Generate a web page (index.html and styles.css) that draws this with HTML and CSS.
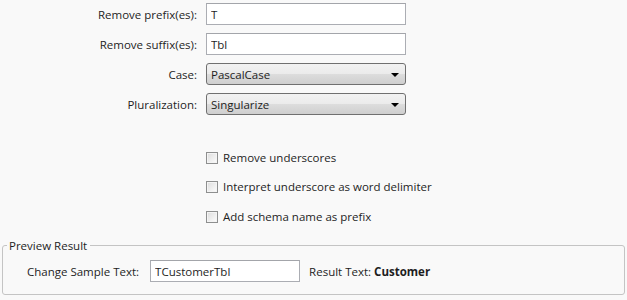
FILE: index.html
```html
<!DOCTYPE html>
<html lang="en">
<head>
    <meta charset="UTF-8">
    <title>Naming Options</title>
    <link rel="stylesheet" href="styles.css">
</head>
<body>

    <div class="form">
        <label for="prefix">Remove prefix(es):</label>
        <input type="text" id="prefix" class="text-box" value="T">

        <label for="suffix">Remove suffix(es):</label>
        <input type="text" id="suffix" class="text-box" value="Tbl">

        <label>Case:</label>
        <div class="combo">
            <span>PascalCase</span>
            <span class="arrow"></span>
        </div>

        <label>Pluralization:</label>
        <div class="combo">
            <span>Singularize</span>
            <span class="arrow"></span>
        </div>
    </div>

    <div class="checks">
        <div class="check first"><span class="box"></span>Remove underscores</div>
        <div class="check"><span class="box"></span>Interpret underscore as word delimiter</div>
        <div class="check last"><span class="box"></span>Add schema name as prefix</div>
    </div>

    <fieldset class="preview">
        <legend>Preview Result</legend>
        <div class="preview-row">
            <label for="sample">Change Sample Text:</label>
            <input type="text" id="sample" class="text-box sample" value="TCustomerTbl">
            <span class="result">Result Text: <b>Customer</b></span>
        </div>
    </fieldset>

</body>
</html>
```

FILE: styles.css
```css
body {
    margin: 0;
    background: #f9f9f9;
    font-family: "Open Sans", "Noto Sans", sans-serif;
    font-size: 11.5px;
    color: #1e1e1e;
    height: 300px;
    overflow: hidden;
}
.form {
    display: grid;
    grid-template-columns: 197px 200px;
    column-gap: 9px;
    row-gap: 8px;
    padding-top: 3px;
}
.form label {
    text-align: right;
    align-self: center;
}
.text-box {
    box-sizing: border-box;
    height: 22px;
    margin: 0;
    padding: 0 4px;
    border: 1px solid #abadb3;
    border-top-color: #a3a5aa;
    background: #fff;
    font-family: inherit;
    font-size: inherit;
    color: #1e1e1e;
    outline: none;
}
.combo {
    box-sizing: border-box;
    height: 22px;
    display: flex;
    align-items: center;
    justify-content: space-between;
    padding: 0 6px 0 4px;
    border: 1px solid #707070;
    border-radius: 3px;
    background: linear-gradient(#f2f2f2, #ebebeb 50%, #dddddd 51%, #cfcfcf);
}
.arrow {
    width: 0;
    height: 0;
    border-left: 4px solid transparent;
    border-right: 4px solid transparent;
    border-top: 4px solid #000;
    margin-top: 1px;
}
.checks {
    margin: 35px 0 0 206px;
}
.check {
    display: flex;
    align-items: center;
    height: 15px;
    margin-bottom: 14px;
}
.check.last {
    margin-top: 15px;
}
.box {
    box-sizing: border-box;
    width: 12px;
    height: 12px;
    margin-right: 5px;
    border: 1px solid #8e8f8f;
    background: linear-gradient(135deg, #dcdcdc, #fdfdfd);
    box-shadow: inset 0 0 0 1px #f4f4f4;
}
.preview {
    box-sizing: border-box;
    margin: 13px 2px 0;
    height: 57px;
    padding: 7px 0 0 24px;
    border: 1px solid #c4c4c4;
    border-radius: 3px;
}
.preview legend {
    padding: 0 3px 0 2px;
    margin-left: -20px;
}
.preview-row {
    display: flex;
    align-items: center;
}
.sample {
    width: 150px;
    margin: 0 9px 0 11px;
}
.result b {
    font-weight: bold;
}
```
